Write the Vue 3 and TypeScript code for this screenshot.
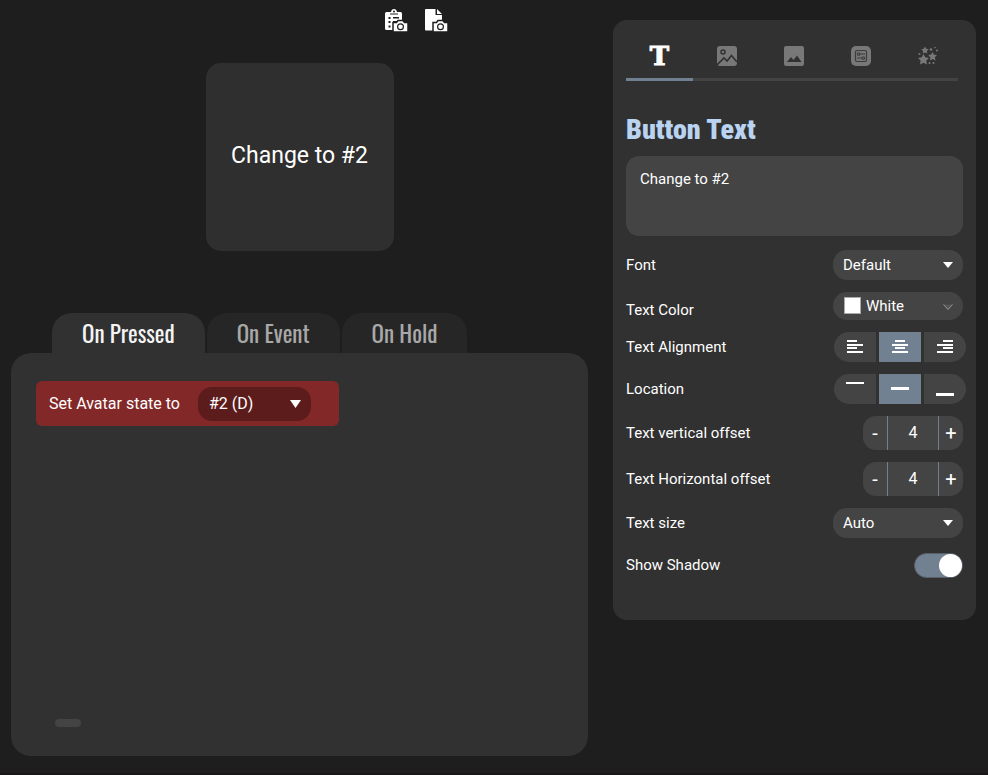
<script setup lang="ts">
import { ref } from 'vue'

type Align = 'left' | 'center' | 'right'
type Location = 'top' | 'middle' | 'bottom'

const settingTabs = ['Text', 'Icon', 'Background', 'Options', 'Effects']
const activeSetting = ref(0)

const actionTabs = ['On Pressed', 'On Event', 'On Hold']
const activeAction = ref(0)

const buttonText = ref('Change to #2')
const font = ref('Default')
const color = ref('White')
const size = ref('Auto')
const avatarState = ref('#2 (D)')
const align = ref<Align>('center')
const place = ref<Location>('middle')
const offsets = ref([
  { id: 'offset-v', label: 'Text vertical offset', value: 4 },
  { id: 'offset-h', label: 'Text Horizontal offset', value: 4 },
])
const shadow = ref(true)

const aligns: { value: Align; path: string }[] = [
  { value: 'left', path: 'M1 1h10v2H1zM1 5h16v2H1zM1 8h10v2H1zM1 12h16v2H1z' },
  { value: 'center', path: 'M4 1h10v2H4zM1 5h16v2H1zM4 8h10v2H4zM1 12h16v2H1z' },
  { value: 'right', path: 'M7 1h10v2H7zM1 5h16v2H1zM7 8h10v2H7zM1 12h16v2H1z' },
]
const places: { value: Location; path: string }[] = [
  { value: 'top', path: 'M0 0h18v2H0z' },
  { value: 'middle', path: 'M0 5h18v3H0z' },
  { value: 'bottom', path: 'M0 11h18v3H0z' },
]
</script>

<template>
  <div class="app">
    <main class="editor">
      <div class="tools">
        <button class="tool" type="button" aria-label="Paste capture">
          <svg width="23" height="23" viewBox="0 0 23 23">
            <path fill="#fff" d="M2 3h4c.3-2 1.5-3 3-3s2.700 1 3 3h3.500A1.500 1.500 0 0 1 17 4.500V21H1.500A1.500 1.500 0 0 1 0 19.500V4.500A1.500 1.500 0 0 1 1.500 3z" />
            <circle cx="9" cy="2.600" r="1" fill="#1e1e1e" />
            <path fill="#1e1e1e" d="M5 4.500h8v1H5zM3.500 8h2v2h-2zM8 8h6v1.500H8zM3.500 12h2v2h-2zM8 12h4v1.500H8zM3.500 16.500h2v2h-2z" />
            <path fill="#fff" stroke="#1e1e1e" stroke-width="1.500" d="M8.500 13.500h3l1.500-2h5l1.500 2h3.500v9.500H8v-9.500z" />
            <circle cx="15.500" cy="17.700" r="2.900" fill="none" stroke="#1e1e1e" stroke-width="1.200" />
          </svg>
        </button>
        <button class="tool" type="button" aria-label="File capture">
          <svg width="23" height="23" viewBox="0 0 23 23">
            <path fill="#fff" d="M1 0h9.500v6H17v15.500H1a1 1 0 0 1-1-1V1a1 1 0 0 1 1-1zM12 0l5 5h-5z" />
            <path fill="#fff" stroke="#1e1e1e" stroke-width="1.500" d="M8.500 13.500h3l1.500-2h5l1.500 2h3.500v9.500H8v-9.500z" />
            <circle cx="15.500" cy="17.700" r="2.900" fill="none" stroke="#1e1e1e" stroke-width="1.200" />
          </svg>
        </button>
      </div>

      <div class="preview">{{ buttonText }}</div>

      <section class="actions">
        <nav class="action-tabs">
          <button
            v-for="(tab, i) in actionTabs"
            :key="tab"
            type="button"
            class="action-tab"
            :class="{ active: i === activeAction }"
            @click="activeAction = i"
          >{{ tab }}</button>
        </nav>
        <div class="action-panel">
          <div class="action">
            <label for="avatar-state">Set Avatar state to</label>
            <span class="select dark">
              <select id="avatar-state" v-model="avatarState"><option>#2 (D)</option></select>
              <svg class="caret" width="11" height="8" viewBox="0 0 11 8"><path fill="#fff" d="M0 0h11L5.500 8z" /></svg>
            </span>
          </div>
          <button class="handle" type="button" aria-label="Add action"></button>
        </div>
      </section>
    </main>

    <aside class="settings">
      <nav class="setting-tabs">
        <button
          v-for="(tab, i) in settingTabs"
          :key="tab"
          type="button"
          class="setting-tab"
          :class="{ active: i === activeSetting }"
          :aria-label="tab"
          @click="activeSetting = i"
        >
          <span v-if="i === 0" class="t-icon">T</span>
          <svg v-else-if="i === 1" width="20" height="20" viewBox="0 0 20 20">
            <rect width="20" height="20" rx="3" fill="#787878" />
            <circle cx="6" cy="6" r="2" fill="none" stroke="#313131" stroke-width="1.500" />
            <path fill="none" stroke="#313131" stroke-width="1.600" d="M0 19l7-7 3 3 4.500-5.500L20 16" />
          </svg>
          <svg v-else-if="i === 2" width="20" height="20" viewBox="0 0 20 20">
            <rect width="20" height="20" rx="2" fill="#787878" />
            <path fill="#313131" d="M3 16l4-5 2.500 3 3.500-4.500 4.500 6.500z" />
          </svg>
          <svg v-else-if="i === 3" width="20" height="20" viewBox="0 0 20 20">
            <rect width="20" height="20" rx="5" fill="#787878" />
            <rect x="4.500" y="4.500" width="11" height="11" rx="1.500" fill="none" stroke="#3c3c3c" stroke-width="1.200" />
            <g fill="none" stroke="#3c3c3c" stroke-width="1.100">
              <circle cx="7.700" cy="8" r="1.300" /><path d="M9 8h5M6 12h5" /><circle cx="12.300" cy="12" r="1.300" />
            </g>
          </svg>
          <svg v-else width="20" height="20" viewBox="0 0 20 20" fill="#787878">
            <path d="M7 .5l1.200 2.300 2.500.4-1.800 1.900.4 2.500L7 6.500 4.700 7.600l.4-2.500-1.800-1.900 2.500-.4z" />
            <path d="M5.500 8l1.700 3.300 3.800.6-2.700 2.700.6 3.900-3.400-1.800L2 18.500l.6-3.900L0 11.900l3.800-.6z" />
            <path d="M14.500 6l1.500 2.700 3 .3-2.100 2.300.6 3.100-2.800-1.300-2.800 1.400.5-3.100L10.200 9l3-.4z" />
            <circle cx="13" cy="3.500" r="1.300" /><circle cx="17" cy="1.500" r=".8" /><circle cx="19" cy="4.500" r="1" />
            <circle cx="1.500" cy="8" r="1" /><circle cx="11.500" cy="17" r="1" /><circle cx="15.500" cy="17" r="1" />
          </svg>
        </button>
      </nav>

      <h2><label for="button-text">Button Text</label></h2>
      <textarea id="button-text" v-model="buttonText" spellcheck="false"></textarea>

      <form class="fields" @submit.prevent>
        <div class="row">
          <label for="font">Font</label>
          <span class="select">
            <select id="font" v-model="font"><option>Default</option></select>
            <svg class="caret" width="10" height="6" viewBox="0 0 10 6"><path fill="#fff" d="M0 0h10L5 6z" /></svg>
          </span>
        </div>
        <div class="row low">
          <label for="color">Text Color</label>
          <span class="select color">
            <span class="swatch"></span>
            <select id="color" v-model="color"><option>White</option></select>
            <svg class="caret" width="10" height="6" viewBox="0 0 10 6"><path fill="#555" stroke="#999" d="M.5.5L5 5.500 9.500.5" /></svg>
          </span>
        </div>
        <div class="row">
          <span>Text Alignment</span>
          <span class="segments" role="radiogroup" aria-label="Text Alignment">
            <label v-for="a in aligns" :key="a.value" class="segment" :class="{ on: align === a.value }">
              <input v-model="align" type="radio" name="align" :value="a.value" :aria-label="a.value">
              <svg width="18" height="16" viewBox="0 0 18 16"><path fill="#fff" :d="a.path" /></svg>
            </label>
          </span>
        </div>
        <div class="row">
          <span>Location</span>
          <span class="segments" role="radiogroup" aria-label="Location">
            <label v-for="p in places" :key="p.value" class="segment" :class="{ on: place === p.value }">
              <input v-model="place" type="radio" name="place" :value="p.value" :aria-label="p.value">
              <svg width="18" height="14" viewBox="0 0 18 14"><path fill="#fff" :d="p.path" /></svg>
            </label>
          </span>
        </div>
        <div v-for="o in offsets" :key="o.id" class="row">
          <label :for="o.id">{{ o.label }}</label>
          <span class="stepper">
            <button type="button" aria-label="Decrease" @click="o.value--">-</button>
            <input :id="o.id" v-model.number="o.value" type="text" inputmode="numeric">
            <button type="button" aria-label="Increase" @click="o.value++">+</button>
          </span>
        </div>
        <div class="row">
          <label for="size">Text size</label>
          <span class="select">
            <select id="size" v-model="size"><option>Auto</option></select>
            <svg class="caret" width="10" height="6" viewBox="0 0 10 6"><path fill="#fff" d="M0 0h10L5 6z" /></svg>
          </span>
        </div>
        <div class="row">
          <label for="shadow">Show Shadow</label>
          <input id="shadow" v-model="shadow" class="toggle" type="checkbox">
        </div>
      </form>
    </aside>
  </div>
</template>

<style>
body {
  background: #1e1e1e;
}
</style>

<style scoped>
.app,
.app * {
  box-sizing: border-box;
}
.app {
  display: grid;
  grid-template-columns: minmax(0, 1fr) 363px;
  align-items: start;
  gap: 25px;
  min-height: 100vh;
  padding: 0 12px 17px 11px;
  border-bottom: 2px solid #191718;
  background: #1e1e1e;
  color: #fff;
  font: 15px/20px Roboto, sans-serif;
}
button,
input,
select,
textarea {
  margin: 0;
  padding: 0;
  border: 0;
  background: none;
  color: inherit;
  font: inherit;
}
button,
select {
  cursor: pointer;
}
svg {
  display: block;
}

.editor {
  display: flex;
  flex-direction: column;
  align-self: stretch;
  align-items: center;
  padding-top: 9px;
}
.tools {
  display: flex;
  align-self: flex-end;
  gap: 17px;
  margin-right: 140px;
}
.preview {
  display: flex;
  align-items: center;
  justify-content: center;
  width: 188px;
  height: 188px;
  margin: 31px 0 62px;
  padding-bottom: 2px;
  border-radius: 15px;
  background: #2f2f2f;
  font-size: 23px;
}
.actions {
  display: flex;
  flex: 1;
  flex-direction: column;
  align-self: stretch;
}
.action-tabs {
  display: flex;
  gap: 2px;
  padding: 0 41px;
}
.action-tab {
  height: 40px;
  padding: 0 30px;
  border-radius: 20px 20px 0 0;
  background: #262626;
  color: #a8a8a8;
  font: 23px/40px Oswald, "Roboto Condensed", "Liberation Sans Narrow", sans-serif;
}
.action-tab.active {
  background: #313131;
  color: #f4f4f4;
}
.action-panel {
  display: flex;
  flex: 1;
  flex-direction: column;
  align-items: flex-start;
  justify-content: space-between;
  padding: 28px 25px 29px;
  border-radius: 20px;
  background: #313131;
}
.action {
  display: flex;
  align-items: center;
  gap: 18px;
  height: 45px;
  padding: 0 28px 0 13px;
  border-radius: 6px;
  background: #832828;
  font-size: 16px;
}
.handle {
  width: 26px;
  height: 8px;
  margin-left: 19px;
  border-radius: 4px;
  background: #444;
}

.settings {
  margin-top: 20px;
  padding: 12px 13px 40px;
  border-radius: 14px;
  background: #313131;
}
.setting-tabs {
  display: flex;
  margin-right: 5px;
  border-bottom: 3px solid #434343;
}
.setting-tab {
  display: flex;
  flex: 0 0 67px;
  align-items: center;
  justify-content: center;
  height: 49px;
  margin-bottom: -3px;
  padding-top: 2px;
  border-bottom: 3px solid transparent;
}
.setting-tab.active {
  border-color: #728191;
}
.t-icon {
  font: bold 26px/20px "DejaVu Serif", serif;
  -webkit-text-stroke: 1px #fff;
}
h2 {
  margin: 34px 0 11px;
  color: #b9d3f0;
  font: 900 28px/30px "Roboto Condensed", "Liberation Sans Narrow", sans-serif;
}
textarea {
  display: block;
  width: 100%;
  height: 80px;
  padding: 13px 14px;
  border-radius: 13px;
  outline: none;
  background: #444;
  resize: none;
}
.fields {
  display: flex;
  flex-direction: column;
  gap: 12px;
  margin-top: 14px;
}
.row {
  display: flex;
  align-items: center;
  justify-content: space-between;
  min-height: 30px;
}
.row.low {
  align-items: flex-end;
  min-height: 28px;
}
.select {
  position: relative;
  display: block;
  width: 130px;
  height: 30px;
  border-radius: 14px;
  background: #444;
}
.select select {
  width: 100%;
  height: 100%;
  padding-left: 10px;
  outline: none;
  appearance: none;
}
.select option {
  background: #444;
}
.caret {
  position: absolute;
  top: 12px;
  right: 10px;
  pointer-events: none;
}
.select.color {
  height: 28px;
}
.select.color select {
  padding-left: 33px;
}
.swatch {
  position: absolute;
  top: 5px;
  left: 11px;
  width: 17px;
  height: 17px;
  border: 1px solid #aaa;
  background: #fff;
  pointer-events: none;
}
.select.dark {
  width: 113px;
  height: 34px;
  background: #5c1c1c;
}
.select.dark select {
  padding-left: 11px;
}
.select.dark .caret {
  top: 13px;
}
.segments {
  display: flex;
  gap: 3px;
  margin-right: -3px;
}
.segment {
  position: relative;
  display: flex;
  align-items: center;
  justify-content: center;
  width: 42px;
  height: 30px;
  background: #444;
}
.segment:first-child {
  border-radius: 15px 0 0 15px;
}
.segment:last-child {
  border-radius: 0 15px 15px 0;
}
.segment.on {
  background: #728191;
}
.segment input {
  position: absolute;
  inset: 0;
  opacity: 0;
}
.stepper {
  display: flex;
  width: 100px;
  height: 34px;
  overflow: hidden;
  border-radius: 13px;
  background: #444;
  font-size: 16px;
}
.stepper button {
  width: 24px;
  font-size: 20px;
}
.stepper input {
  flex: 1;
  min-width: 0;
  border: solid #728191;
  border-width: 0 1px;
  outline: none;
  text-align: center;
}
.toggle {
  display: flex;
  justify-content: flex-end;
  width: 49px;
  height: 25px;
  border: 1px solid #5a6068;
  border-radius: 13px;
  background: #728191;
  appearance: none;
}
.toggle::before {
  width: 23px;
  height: 23px;
  border-radius: 50%;
  background: #fff;
  content: "";
}
.toggle:not(:checked) {
  justify-content: flex-start;
  background: #444;
}
</style>
